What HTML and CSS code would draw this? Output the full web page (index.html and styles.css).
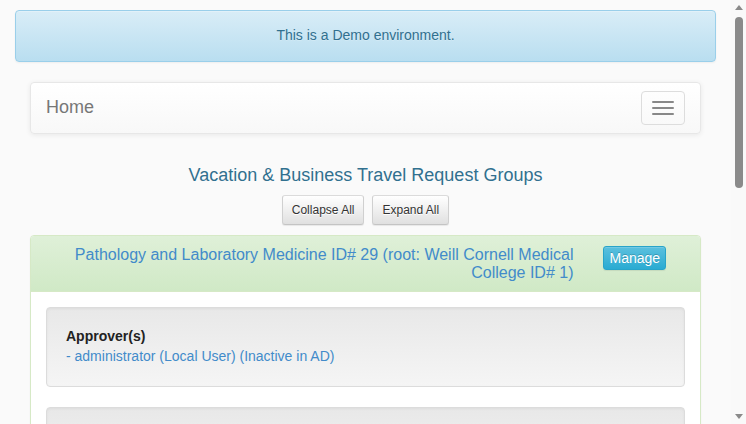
FILE: index.html
```html
<!DOCTYPE html>
<html lang="en">
<head>
<meta charset="utf-8">
<title>Vacation &amp; Business Travel Request Groups</title>
<link rel="stylesheet" href="styles.css">
</head>
<body>
<div class="page">
  <main class="viewport">
    <div class="container">
      <div class="alert">This is a Demo environment.</div>
      <div class="inner">
        <nav class="navbar">
          <a class="brand" href="#">Home</a>
          <button class="toggle" type="button" aria-label="Toggle navigation">
            <span class="bar"></span><span class="bar"></span><span class="bar"></span>
          </button>
        </nav>

        <h4 class="page-title">Vacation &amp; Business Travel Request Groups</h4>
        <div class="actions">
          <button class="btn" type="button">Collapse All</button>
          <button class="btn" type="button">Expand All</button>
        </div>

        <div class="panel">
          <div class="panel-heading">
            <h4 class="panel-title">Pathology and Laboratory Medicine ID# 29 (root: Weill Cornell Medical College ID# 1)</h4>
            <div class="manage-col"><button class="btn-manage" type="button">Manage</button></div>
          </div>
          <div class="panel-body">
            <div class="well">
              <strong>Approver(s)</strong>
              <a href="#">- administrator (Local User) (Inactive in AD)</a>
            </div>
            <div class="well">
              <strong>Submitter(s)</strong>
              <a href="#">- administrator (Local User) (Inactive in AD)</a>
            </div>
          </div>
        </div>
      </div>
    </div>
  </main>
  <div class="scrollbar" aria-hidden="true">
    <span class="arrow-up"></span>
    <span class="thumb"></span>
    <span class="track-rest"></span>
    <span class="arrow-down"></span>
  </div>
</div>
</body>
</html>
```
FILE: styles.css
```css
* { box-sizing: border-box; }
html, body { margin: 0; height: 100%; overflow: hidden; }
body {
  background: #fafafa;
  font-family: "Liberation Sans", Arial, Helvetica, sans-serif;
  font-size: 14px;
  line-height: 1.42857;
  color: #333;
}
.page { display: flex; height: 100vh; }
.viewport { flex: 1; min-width: 0; overflow: hidden; }
.scrollbar {
  flex: 0 0 15px;
  display: flex;
  flex-direction: column;
  align-items: center;
  background: #f9f9f9;
  padding: 5px 0 5px;
}
.arrow-up {
  width: 0; height: 0;
  border-left: 4px solid transparent;
  border-right: 4px solid transparent;
  border-bottom: 5px solid #8a8a8a;
  margin-bottom: 7px;
}
.thumb {
  width: 8px;
  height: 171px;
  border-radius: 4px;
  background: #8a8a8a;
}
.track-rest { flex: 1; }
.arrow-down {
  width: 0; height: 0;
  border-left: 4px solid transparent;
  border-right: 4px solid transparent;
  border-top: 5px solid #8a8a8a;
}
.container { padding: 10px 15px 30px; }
.alert {
  padding: 15px;
  border: 1px solid #9acfea;
  border-radius: 4px;
  background: linear-gradient(to bottom, #d9edf7 0, #b9def0 100%);
  color: #31708f;
  text-align: center;
  text-shadow: 0 1px 0 rgba(255,255,255,.2);
  box-shadow: inset 0 1px 0 rgba(255,255,255,.25), 0 1px 2px rgba(0,0,0,.05);
  margin-bottom: 20px;
  height: 52px;
}
.inner { padding: 0 15px; }
.navbar {
  display: flex;
  align-items: center;
  justify-content: space-between;
  height: 52px;
  border: 1px solid #e7e7e7;
  border-radius: 4px;
  background: linear-gradient(to bottom, #fff 0, #f8f8f8 100%);
  box-shadow: inset 0 1px 0 rgba(255,255,255,.15), 0 1px 5px rgba(0,0,0,.075);
  margin-bottom: 20px;
}
.brand {
  padding: 0 15px;
  font-size: 18px;
  color: #777;
  text-decoration: none;
  text-shadow: 0 1px 0 rgba(255,255,255,.25);
}
.toggle {
  margin-right: 15px;
  width: 44px;
  height: 34px;
  padding: 9px 10px;
  border: 1px solid #ddd;
  border-radius: 4px;
  background: transparent;
  display: flex;
  flex-direction: column;
  justify-content: center;
  gap: 4px;
}
.bar { display: block; width: 22px; height: 2px; background: #888; border-radius: 1px; }
.page-title {
  margin: 31px 0 10px;
  text-align: center;
  font-size: 18px;
  font-weight: normal;
  line-height: 20px;
  color: #31708f;
}
.actions {
  display: flex;
  justify-content: center;
  gap: 8px;
  margin-bottom: 10px;
}
.btn {
  font-family: inherit;
  font-size: 12px;
  line-height: 18px;
  padding: 5px 9px;
  height: 30px;
  border: 1px solid #ccc;
  border-color: #dbdbdb #d0d0d0 #c4c4c4;
  border-radius: 3px;
  color: #333;
  background: linear-gradient(to bottom, #fff 0, #e0e0e0 100%);
  text-shadow: 0 1px 0 #fff;
  box-shadow: inset 0 1px 0 rgba(255,255,255,.15), 0 1px 1px rgba(0,0,0,.075);
}
.panel {
  background: #fff;
  border: 1px solid #d6e9c6;
  border-radius: 4px;
  box-shadow: 0 1px 2px rgba(0,0,0,.05);
}
.panel-heading {
  display: flex;
  align-items: flex-start;
  padding: 10px 0;
  background: linear-gradient(to bottom, #dff0d8 0, #d0e9c6 100%);
  border-bottom: 1px solid #d6e9c6;
  border-radius: 3px 3px 0 0;
}
.panel-title {
  flex: 0 0 83.3333%;
  margin: 0;
  padding: 0 15px;
  text-align: right;
  font-size: 16px;
  font-weight: normal;
  line-height: 1.1;
  color: #428bca;
}
.manage-col { flex: 1; padding: 0 15px; }
.btn-manage {
  font-family: inherit;
  font-size: 14px;
  font-weight: normal;
  line-height: 20px;
  height: 24px;
  padding: 1px 5px;
  color: #fff;
  border: 1px solid #28a4c9;
  border-radius: 3px;
  background: linear-gradient(to bottom, #5bc0de 0, #2aabd2 100%);
  text-shadow: 0 -1px 0 rgba(0,0,0,.2);
  box-shadow: inset 0 1px 0 rgba(255,255,255,.15), 0 1px 1px rgba(0,0,0,.075);
}
.panel-body { padding: 15px; }
.well {
  display: flex;
  flex-direction: column;
  padding: 19px;
  margin-bottom: 20px;
  border: 1px solid #dcdcdc;
  border-radius: 4px;
  background: linear-gradient(to bottom, #e8e8e8 0, #f5f5f5 100%);
  box-shadow: inset 0 1px 3px rgba(0,0,0,.05), 0 1px 0 rgba(255,255,255,.1);
}
.well:last-child { margin-bottom: 0; }
.well strong { color: #222; }
.well a { color: #428bca; text-decoration: none; }
```
